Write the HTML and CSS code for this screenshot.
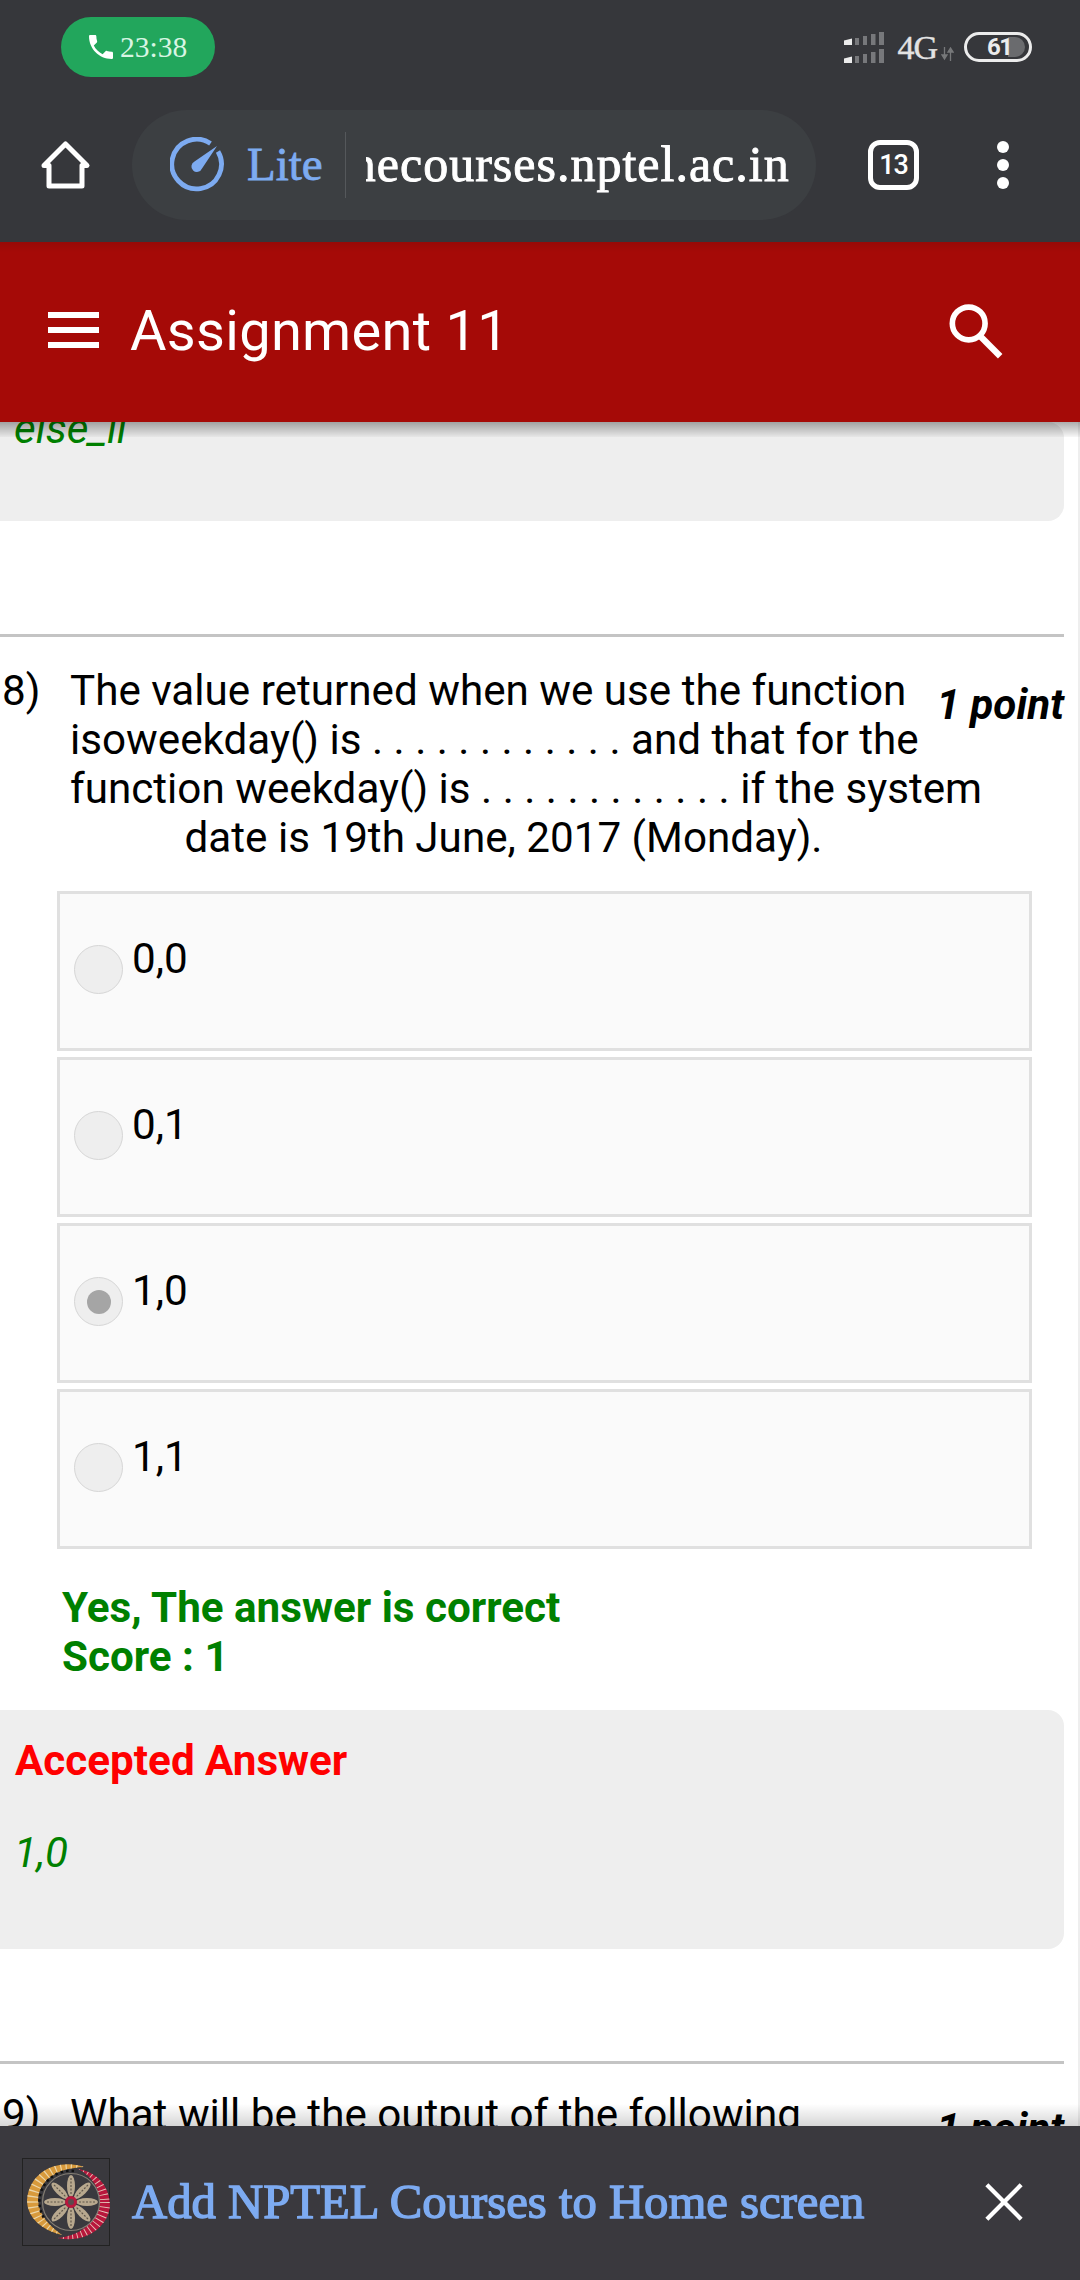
FILE: index.html
```html
<!DOCTYPE html>
<html lang="en">
<head>
<meta charset="utf-8">
<title>Assignment 11</title>
<link rel="stylesheet" href="styles.css">
</head>
<body>
<div class="screen">
  <header class="chrome">
    <div class="status">
      <div class="call">
        <svg class="call-icon" viewBox="0 0 24 24"><path d="M6.600 10.800c1.400 2.800 3.800 5.100 6.600 6.600l2.200-2.200c.3-.3.700-.4 1-.2 1.100.4 2.300.6 3.600.6.600 0 1 .4 1 1V20c0 .6-.4 1-1 1C10.600 21 3 13.400 3 4c0-.6.400-1 1-1h3.500c.6 0 1 .4 1 1 0 1.300.2 2.500.6 3.600.1.300 0 .7-.2 1z" fill="#fff"/></svg>
        <span>23:38</span>
      </div>
      <div class="indicators">
        <svg class="signal" width="42" height="34" viewBox="0 0 42 34">
          <g fill="#ececec"><path d="M1 10.500L9 8.500V15H1zM1 28.500L9 26.500V33H1z"/></g>
          <g fill="#77787b"><rect x="12" y="8" width="4" height="7"/><rect x="20" y="6" width="4" height="9"/><rect x="28" y="4" width="4.500" height="11"/><rect x="36" y="2" width="5" height="13"/><rect x="12" y="26" width="4" height="7"/><rect x="20" y="24" width="4" height="9"/><rect x="28" y="22" width="4.500" height="11"/><rect x="36" y="19" width="5" height="14"/></g>
        </svg>
        <span class="net">4G</span>
        <svg class="updown" width="13" height="14" viewBox="0 0 13 14"><path d="M3.500 0v9M1 8l2.500 4 2.500-4z M9.500 14V4M7 5l2.500-4 2.500 4z" stroke="#77787a" stroke-width="1.300" fill="#77787a"/></svg>
        <div class="battery"><div class="battery-fill"></div><span class="battery-num">61</span></div>
      </div>
    </div>
    <div class="toolbar">
      <svg class="home" width="52" height="52" viewBox="0 0 52 52"><path d="M25.500 5L47 26.500H42V47H9V26.500H4z" fill="none" stroke="#fff" stroke-width="5" stroke-linejoin="round"/></svg>
      <div class="omnibox">
        <svg class="gauge" width="56" height="56" viewBox="0 0 56 56"><path d="M40.500 6.500A24.800 24.800 0 1 0 48 14.500" fill="none" stroke="#7dabf1" stroke-width="4.800"/><path d="M47 9L32 31.500a5.500 5.500 0 1 1-7.500-7z" fill="#7dabf1"/></svg>
        <span class="lite">Lite</span>
        <span class="divider"></span>
        <div class="url-clip"><span class="url">onlinecourses.nptel.ac.in</span></div>
      </div>
      <div class="tabs">13</div>
      <div class="menu"><i></i><i></i><i></i></div>
    </div>
  </header>

  <div class="appbar">
    <div class="burger"><i></i><i></i><i></i></div>
    <h1 class="title">Assignment 11</h1>
    <svg class="search" width="68" height="68" viewBox="0 0 54 54"><circle cx="22" cy="21" r="13" fill="none" stroke="#fff" stroke-width="4.500"/><path d="M31 31L47 47" stroke="#fff" stroke-width="5"/></svg>
  </div>

  <main class="content">
    <section class="answer-box prev"><em class="answer">else_ii</em></section>

    <hr class="rule first-rule">

    <section class="question">
      <span class="num">8)</span>
      <div class="q-text">
        <span class="points">1 point</span>
        <p class="q-line">The value returned when we use the function isoweekday() is . . . . . . . . . . . . and that for the function weekday() is . . . . . . . . . . . . if the system</p>
        <p class="q-line center">date is 19th June, 2017 (Monday).</p>
      </div>
    </section>

    <div class="options">
      <label class="option"><span class="radio"></span><span class="opt-text">0,0</span></label>
      <label class="option"><span class="radio"></span><span class="opt-text">0,1</span></label>
      <label class="option"><span class="radio checked"></span><span class="opt-text">1,0</span></label>
      <label class="option"><span class="radio"></span><span class="opt-text">1,1</span></label>
    </div>

    <div class="feedback">Yes, The answer is correct<br>Score : 1</div>

    <section class="answer-box accepted">
      <div class="accepted-title">Accepted Answer</div>
      <em class="answer">1,0</em>
    </section>

    <hr class="rule second-rule">

    <section class="question next">
      <span class="num">9)</span>
      <div class="q-text">
        <span class="points">1 point</span>
        <p class="q-line">What will be the output of the following</p>
      </div>
    </section>
  </main>

  <footer class="banner">
    <div class="logo">
      <svg width="88" height="88" viewBox="0 0 88 88">
        <defs>
          <g id="petal">
            <ellipse cx="49" cy="28" rx="4" ry="11" fill="#b8a88e"/>
            <path d="M49 20V36" stroke="#5f564a" stroke-width="1.200" stroke-dasharray="2 1.500"/>
          </g>
          <clipPath id="orange-clip"><path d="M62 9C40 1 8 10 5 42C5 60 20 72 40 77C28 68 17 58 16 42C17 22 35 10 62 9z"/></clipPath>
          <clipPath id="red-clip"><path d="M56 11C75 14 88 28 88 48C86 70 62 86 36 80C56 78 74 66 78 46C78 30 70 18 56 11z"/></clipPath>
        </defs>
        <path d="M62 9C40 1 8 10 5 42C5 60 20 72 40 77C28 68 17 58 16 42C17 22 35 10 62 9z" fill="#d89a3c"/>
        <g clip-path="url(#orange-clip)"><circle cx="47" cy="44" r="35" fill="none" stroke="#ecd6a8" stroke-width="20" stroke-dasharray="1.200 4"/></g>
        <path d="M56 11C75 14 88 28 88 48C86 70 62 86 36 80C56 78 74 66 78 46C78 30 70 18 56 11z" fill="#b8173c"/>
        <g clip-path="url(#red-clip)"><circle cx="47" cy="44" r="38" fill="none" stroke="#e4c4b8" stroke-width="20" stroke-dasharray="1 4"/></g>
        <path d="M52 13A31 31 0 0 0 22 60" fill="none" stroke="#111" stroke-width="2.500" stroke-dasharray="2.500 3"/>
        <circle cx="49" cy="44" r="28.500" fill="none" stroke="#857e74" stroke-width="1.200"/>
        <use href="#petal"/>
        <use href="#petal" transform="rotate(45 49 44)"/>
        <use href="#petal" transform="rotate(90 49 44)"/>
        <use href="#petal" transform="rotate(135 49 44)"/>
        <use href="#petal" transform="rotate(180 49 44)"/>
        <use href="#petal" transform="rotate(225 49 44)"/>
        <use href="#petal" transform="rotate(270 49 44)"/>
        <use href="#petal" transform="rotate(315 49 44)"/>
        <circle cx="49" cy="44" r="4.500" fill="#5c4a4c" stroke="#b8173c" stroke-width="3"/>
      </svg>
    </div>
    <span class="banner-text">Add NPTEL Courses to Home screen</span>
    <svg class="close" width="40" height="40" viewBox="0 0 42 42"><path d="M3 3L39 39M39 3L3 39" stroke="#fff" stroke-width="4.500"/></svg>
  </footer>
</div>
</body>
</html>
```
FILE: styles.css
```css
* { box-sizing: border-box; }
html, body { margin: 0; padding: 0; }
.screen {
  width: 1080px; height: 2280px; overflow: hidden;
  display: flex; flex-direction: column;
  background: #fff; font-family: Roboto, sans-serif; color: #000;
}

/* Browser chrome */
.chrome { height: 242px; background: #36373b; flex: none; position: relative; z-index: 3; }
.status { height: 110px; display: flex; justify-content: space-between; padding: 17px 48px 0 61px; }
.call {
  width: 154px; height: 60px; border-radius: 30px; background: #22a65c;
  display: flex; align-items: center; padding-left: 24px; gap: 3px;
  color: #d8f5e3; font: 29.500px "Liberation Serif", serif;
}
.call-icon { width: 32px; height: 32px; flex: none; }
.indicators { display: flex; align-items: flex-start; height: 50px; padding-top: 13px; }
.signal { flex: none; }
.net { margin: 3px 0 0 12px; font: 34px/30px "Liberation Serif", serif; letter-spacing: -1px; color: #e3e3e3; -webkit-text-stroke: .4px #e3e3e3; }
.updown { margin: 17px 0 0 4px; flex: none; }
.battery {
  width: 68px; height: 30px; margin-left: 10px; margin-top: 2px;
  border: 3px solid #ececec; border-radius: 15px; position: relative; overflow: hidden;
}
.battery-fill { position: absolute; left: 41px; right: 4px; top: 2px; bottom: 2px; background: #6a6b6e; border-radius: 0 10px 10px 0; }
.battery-num { position: absolute; left: 20px; top: -3px; font: bold 24px/30px Roboto, sans-serif; letter-spacing: -1.500px; color: #ececec; }

.toolbar { height: 110px; display: flex; align-items: center; padding-left: 40px; }
.home { flex: none; }
.omnibox {
  width: 684px; height: 110px; margin-left: 40px; border-radius: 55px; background: #3c3f42;
  display: flex; align-items: center; padding-left: 38px; flex: none;
}
.gauge { flex: none; }
.lite { margin: -2px 0 0 21px; font: 47px "Liberation Serif", serif; color: #7dabf1; -webkit-text-stroke: .8px #7dabf1; }
.divider { width: 1px; height: 66px; background: #55585b; margin-left: 22px; flex: none; }
.url-clip { width: 424px; margin: -3px 0 0 20px; overflow: hidden; direction: rtl; white-space: nowrap; flex: none; }
.url { font: 50px "Liberation Serif", serif; color: #fff; display: inline-block; direction: ltr; letter-spacing: 1px; -webkit-text-stroke: .9px #fff; }
.tabs {
  width: 51px; height: 50px; margin-left: 52px; border: 5px solid #fff; border-radius: 12px; flex: none;
  color: #fff; font: 500 27px/40px Roboto, sans-serif; text-align: center; letter-spacing: -1px;
}
.menu { margin-left: 78px; display: flex; flex-direction: column; gap: 6px; }
.menu i { display: block; width: 12px; height: 12px; border-radius: 50%; background: #fff; }

/* App bar */
.appbar {
  height: 180px; background: linear-gradient(#970a07, #a50a07 10px); flex: none; position: relative; z-index: 2;
  display: flex; align-items: center; padding: 0 0 0 48px;
}
.appbar::after {
  content: ""; position: absolute; left: 0; right: 0; top: 100%; height: 15px;
  background: linear-gradient(rgba(0,0,0,.32), rgba(0,0,0,.03));
}
.burger { display: flex; flex-direction: column; gap: 9px; margin-top: -4px; }
.burger i { display: block; width: 51px; height: 6px; background: #fff; }
.title { margin: -3px 0 0 31px; font: 400 56px Roboto, sans-serif; color: #fff; letter-spacing: .3px; flex: 1; }
.search { margin-right: 71px; margin-top: -2px; flex: none; }

/* Content */
.content { flex: 1; overflow: hidden; padding-right: 14px; border-right: 2px solid #eee; position: relative; z-index: 1; min-height: 0; }
.answer-box { background: #eee; border-radius: 0 16px 16px 0; }
.prev { height: 99px; padding-left: 14px; display: flow-root; }
.prev .answer { display: block; margin-top: -18px; }
.answer { font: italic 42.200px/50px Roboto, sans-serif; color: #008000; }
.rule { border: 0; height: 3px; background: #c4c4c4; margin: 0; }
.first-rule { margin-top: 113px; }
.question { display: flex; margin-top: 29px; position: relative; }
.num { width: 70px; padding-left: 2px; font-size: 42.200px; line-height: 49px; flex: none; }
.q-text { flex: 1; min-width: 0; }
.points { float: right; margin-top: 14px; font: italic bold 42.200px/49px Roboto, sans-serif; }
.q-line { margin: 0; font-size: 42.200px; line-height: 49px; }
.center { text-align: center; padding-right: 127px; }
.options { margin: 29px 32px 0 57px; display: flex; flex-direction: column; gap: 6px; }
.option {
  height: 160px; border: 3px solid #e0e0e0; background: #fafafa;
  display: flex; align-items: flex-start; padding: 51px 0 0 14px;
}
.radio {
  width: 49px; height: 49px; border-radius: 50%; background: #eee; border: 1px solid #d6d6d6; flex: none;
  display: flex; align-items: center; justify-content: center;
}
.radio.checked::after { content: ""; width: 24px; height: 24px; border-radius: 50%; background: #a5a5a5; }
.opt-text { margin: -11px 0 0 9px; font-size: 42.200px; line-height: 49px; }
.feedback { margin: 34px 0 0 62px; font: bold 42.200px/49px Roboto, sans-serif; color: #008000; }
.accepted { height: 239px; margin-top: 29px; padding: 26px 0 0 15px; }
.accepted-title { font: bold 42.200px/49px Roboto, sans-serif; color: #f00; }
.accepted .answer { display: block; margin: 43px 0 0 -1px; }
.second-rule { margin-top: 112px; }
.next { margin-top: 26px; }

/* Bottom banner */
.banner {
  height: 154px; flex: none; background: #3a393e; position: relative; z-index: 2;
  display: flex; align-items: center; padding-left: 22px;
}
.banner::before {
  content: ""; position: absolute; left: 0; right: 0; bottom: 100%; height: 22px;
  background: linear-gradient(rgba(0,0,0,0), rgba(0,0,0,.16));
}
.logo { width: 88px; height: 88px; box-shadow: inset 0 0 0 1px #222; flex: none; margin-top: -2px; }
.logo svg { display: block; }
.banner-text { margin-left: 22px; flex: 1; font: 48.700px "Liberation Serif", serif; color: #7dabf1; -webkit-text-stroke: 1.400px #7dabf1; margin-top: -3px; white-space: nowrap; }
.close { margin-right: 56px; margin-top: -3px; flex: none; }
```
